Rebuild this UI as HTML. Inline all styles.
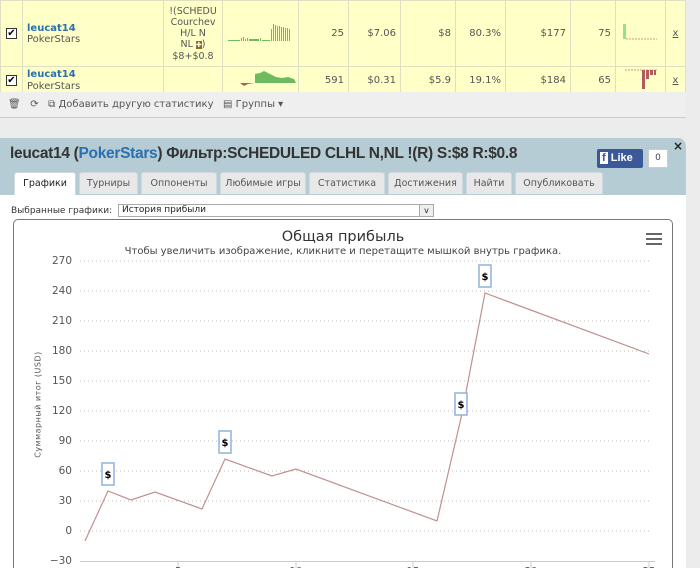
<!DOCTYPE html>
<html style="overflow:hidden;height:568px"><head><meta charset="utf-8"><style>
*{margin:0;padding:0;box-sizing:border-box}
body{width:700px;height:568px;overflow:hidden;background:#ececec;font-family:"DejaVu Sans","Liberation Sans",sans-serif;position:relative;font-size:10px;color:#444}
.abs{position:absolute}
table{border-collapse:collapse;position:absolute;left:0;top:0;width:686px;background:#ffffc8;table-layout:fixed}
td{border:1px solid #e0e0c0;font-size:10px;color:#555;text-align:right;padding:0 4px;overflow:hidden}
.nm{text-align:left;color:#555}
.nm b{color:#2a6fb0;font-weight:bold;display:block}
.cb{width:11px;height:11px;border:1px solid #333;background:#fff;display:inline-block;font-size:10px;line-height:9px;text-align:center;color:#000}
.tab{position:absolute;top:172px;height:22px;background:#e8e8e8;border:1px solid #cfd8dc;border-bottom:none;font-size:9.5px;color:#555;text-align:center;line-height:22px;border-radius:3px 3px 0 0}
.yl{position:absolute;left:40px;width:32px;text-align:right;font-size:10.5px;color:#555}
</style></head><body>
<table>
<tr style="height:66px"><td style="width:22px;text-align:center;padding:0"><span class="cb">✔</span></td><td class="nm" style="width:141px"><b>leucat14</b>PokerStars</td><td style="width:59px;text-align:center;font-size:9.5px;line-height:11px;padding:0">!(SCHEDU<br>Courchev<br>H/L N<br>NL <span style="background:#8a6d1e;color:#fff;font-size:7px">✚</span>)<br>$8+$0.8</td><td style="width:76px;padding:0 2px"><svg width="70" height="22"><g fill="#6dbb5e"><rect x="2" y="19" width="12" height="1"/><rect x="15" y="17" width="1" height="3"/><rect x="17" y="16" width="1" height="4"/><rect x="19" y="18" width="1" height="2"/><rect x="21" y="17" width="1" height="3"/><rect x="23" y="18" width="10" height="2"/><rect x="34" y="17" width="1" height="3"/><rect x="36" y="19" width="8" height="1"/><rect x="45" y="8" width="1" height="12"/><rect x="47" y="3" width="1" height="17"/><rect x="49" y="4" width="1" height="16"/><rect x="51" y="5" width="1" height="15"/><rect x="53" y="5" width="1" height="15"/><rect x="55" y="6" width="1" height="14"/><rect x="57" y="6" width="1" height="14"/><rect x="59" y="7" width="1" height="13"/><rect x="61" y="7" width="1" height="13"/><rect x="63" y="8" width="1" height="12"/></g></svg></td><td style="width:50px">25</td><td style="width:52px">$7.06</td><td style="width:55px">$8</td><td style="width:50px">80.3%</td><td style="width:65px">$177</td><td style="width:45px">75</td><td style="width:50px;text-align:left"><svg width="40" height="20"><rect x="3" y="2" width="3" height="15" fill="#9ade8a"/><line x1="6" y1="17" x2="37" y2="17" stroke="#c9a36a" stroke-dasharray="2,1"/></svg></td><td style="text-decoration:underline;text-align:center">x</td></tr>
<tr style="height:26px"><td style="text-align:center;padding:0"><span class="cb">✔</span></td><td class="nm" style="line-height:12px"><b>leucat14</b>PokerStars</td><td></td><td style="padding:0 2px"><svg width="70" height="24"><path d="M0 16 L14 16 L18 19 L22 17 L28 16Z" fill="#b35b5b"/><path d="M29 16 L29 7 L34 6 L38 4 L44 7 L50 10 L56 11 L62 10 L68 12 L70 16Z" fill="#6dbb5e"/></svg></td><td>591</td><td>$0.31</td><td>$5.9</td><td>19.1%</td><td>$184</td><td>65</td><td style="text-align:left"><svg width="40" height="24"><line x1="5" y1="3" x2="38" y2="3" stroke="#c9a36a" stroke-dasharray="2,1"/><g fill="#b35b5b"><rect x="22" y="3" width="3" height="19"/><rect x="26" y="3" width="3" height="9"/><rect x="30" y="3" width="3" height="5"/><rect x="34" y="3" width="2" height="5"/></g></svg></td><td style="text-decoration:underline;text-align:center">x</td></tr>
</table>
<div class="abs" style="left:0;top:92px;width:686px;height:26px;background:#efefef;border-bottom:1px solid #ccc;font-size:10px;color:#555;line-height:26px;padding-left:8px">🗑 &nbsp;&nbsp;⟳ &nbsp;&nbsp;⧉ Добавить другую статистику &nbsp;&nbsp;▤ Группы ▾</div>
<div class="abs" style="left:0;top:138px;width:686px;height:430px;background:#b6ccd4;border-radius:0 8px 0 0"></div>
<div class="abs" style="left:10px;top:145px;font-family:'Liberation Sans',sans-serif;font-weight:bold;font-size:15.5px;color:#333;letter-spacing:-0.3px">leucat14 (<span style="color:#2a6fb0">PokerStars</span>) Фильтр:SCHEDULED CLHL N,NL !(R) S:$8 R:$0.8</div>
<div class="abs" style="left:597px;top:149px;width:46px;height:19px;background:#3b5998;color:#fff;font-family:'Liberation Sans';font-weight:bold;font-size:11px;line-height:19px;padding-left:3px;border-radius:2px"><span style="background:#fff;color:#3b5998;padding:0 2px">f</span> Like</div>
<div class="abs" style="left:648px;top:149px;width:20px;height:19px;background:#fff;border:1px solid #ccc;font-size:9px;text-align:center;line-height:17px">0</div>
<div class="abs" style="left:673px;top:139px;font-size:12px;font-weight:bold;color:#222">×</div>
<div class="tab" style="left:14px;width:62px;background:#fff;color:#222;height:23px">Графики</div>
<div class="tab" style="left:79px;width:59px">Турниры</div>
<div class="tab" style="left:141px;width:76px">Оппоненты</div>
<div class="tab" style="left:220px;width:86px">Любимые игры</div>
<div class="tab" style="left:309px;width:76px">Статистика</div>
<div class="tab" style="left:388px;width:75px">Достижения</div>
<div class="tab" style="left:466px;width:46px">Найти</div>
<div class="tab" style="left:515px;width:88px">Опубликовать</div>
<div class="abs" style="left:0;top:195px;width:686px;height:373px;background:#fff"></div>
<div class="abs" style="left:11px;top:206px;font-size:9px;color:#333">Выбранные графики:</div>
<div class="abs" style="left:118px;top:204px;width:316px;height:13px;border:1px solid #aaa;font-size:9px;color:#222;line-height:11px;padding-left:3px">История прибыли<span style="position:absolute;right:0;top:0;width:14px;height:11px;border-left:1px solid #aaa;background:#eee;text-align:center;font-size:8px">v</span></div>
<div class="abs" style="left:13px;top:219px;width:660px;height:349px;border:1px solid #777;border-bottom:none;border-radius:5px 5px 0 0"></div>
<div class="abs" style="left:0;top:229px;width:686px;text-align:center;font-size:14.5px;color:#333">Общая прибыль</div>
<div class="abs" style="left:0;top:246px;width:686px;text-align:center;font-size:10px;color:#444">Чтобы увеличить изображение, кликните и перетащите мышкой внутрь графика.</div>
<div class="abs" style="left:646px;top:233px;width:16px;height:12px;border-top:2px solid #666;border-bottom:2px solid #666"><div style="margin-top:3px;height:2px;background:#666"></div></div>
<div class="yl" style="top:255px">270</div><div class="yl" style="top:285px">240</div><div class="yl" style="top:315px">210</div><div class="yl" style="top:345px">180</div><div class="yl" style="top:375px">150</div><div class="yl" style="top:405px">120</div><div class="yl" style="top:435px">90</div><div class="yl" style="top:465px">60</div><div class="yl" style="top:495px">30</div><div class="yl" style="top:525px">0</div><div class="yl" style="top:555px">−30</div>
<div class="abs" style="left:-22px;top:400px;width:120px;transform:rotate(-90deg);font-size:8px;color:#555;text-align:center;letter-spacing:0.5px">Суммарный итог (USD)</div>
<svg class="abs" style="left:0;top:0" width="700" height="568">
<g stroke="#bbb" stroke-dasharray="1,3"><line x1="80" y1="261" x2="652" y2="261"/><line x1="80" y1="291" x2="652" y2="291"/><line x1="80" y1="321" x2="652" y2="321"/><line x1="80" y1="351" x2="652" y2="351"/><line x1="80" y1="381" x2="652" y2="381"/><line x1="80" y1="411" x2="652" y2="411"/><line x1="80" y1="441" x2="652" y2="441"/><line x1="80" y1="471" x2="652" y2="471"/><line x1="80" y1="501" x2="652" y2="501"/><line x1="80" y1="531" x2="652" y2="531"/></g>
<line x1="80" y1="561.5" x2="655" y2="561.5" stroke="#ccc"/>
<g stroke="#ccc"><line x1="178" y1="562" x2="178" y2="568"/><line x1="296" y1="562" x2="296" y2="568"/><line x1="413" y1="562" x2="413" y2="568"/><line x1="531" y1="562" x2="531" y2="568"/><line x1="649" y1="562" x2="649" y2="568"/></g>
<g font-size="10" fill="#555" text-anchor="middle"><text x="178" y="574">5</text><text x="296" y="574">10</text><text x="413" y="574">15</text><text x="531" y="574">20</text><text x="649" y="574">25</text></g>
<polyline fill="none" stroke="#c09090" stroke-width="1.2" points="85,541 108,491 131,500 155,492 202,509 225,459 272,476 296,469 437,521 461,418 485,293 649,354"/>
<g fill="#fff" stroke="#8fb3d9" stroke-width="1.5"><rect x="102" y="463" width="12" height="22"/><rect x="219" y="431" width="12" height="22"/><rect x="455" y="393" width="12" height="22"/><rect x="479" y="265" width="12" height="22"/></g>
<g font-family="DejaVu Sans" font-weight="bold" font-size="10" fill="#000" text-anchor="middle"><text x="108" y="478">$</text><text x="225" y="446">$</text><text x="461" y="408">$</text><text x="485" y="280">$</text></g>
</svg>
</body></html>
